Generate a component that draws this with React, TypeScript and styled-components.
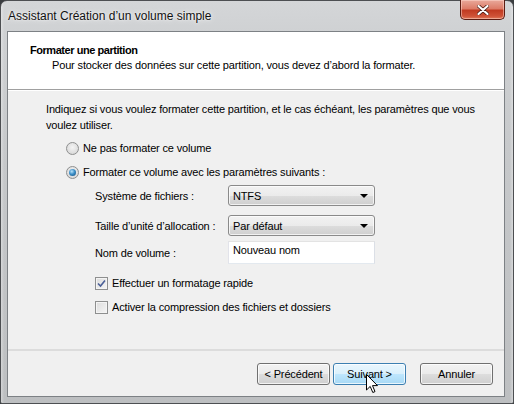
import React from "react";
import styled, { createGlobalStyle } from "styled-components";

const Global = createGlobalStyle`
  html, body { margin: 0; padding: 0; background: #3a3d40; }
  body { width: 514px; height: 404px; overflow: hidden; }
  * { box-sizing: border-box; }
`;

const FONT = `"Liberation Sans", Arial, sans-serif`;

const Window = styled.div`
  position: relative;
  width: 514px;
  height: 404px;
  display: flex;
  flex-direction: column;
  padding: 0 8px 6px 6px;
  border: 1px solid #4d4f52;
  border-radius: 7px 7px 2px 2px;
  background:
    linear-gradient(90deg, rgba(255,255,255,0.35) 0, rgba(255,255,255,0) 3px, rgba(255,255,255,0) calc(100% - 3px), rgba(255,255,255,0.35) 100%),
    linear-gradient(180deg, #d4d6d8 0%, #cfd1d3 8%, #c6c8ca 40%, #bdbfc1 100%);
  font-family: ${FONT};
  font-size: 11px;
  letter-spacing: -0.15px;
  color: #000;
`;

const TitleBar = styled.div`
  height: 30px;
  display: flex;
  align-items: flex-start;
`;

const Title = styled.div`
  padding: 8px 0 0 1px;
  font-size: 12px;
  letter-spacing: 0;
  color: #111;
  text-shadow: 0 0 6px rgba(255,255,255,0.9), 0 0 2px rgba(255,255,255,0.9);
  flex: 1;
`;

const CloseButton = styled.div`
  margin-top: -1px;
  width: 45px;
  height: 20px;
  border: 1px solid #5b1c12;
  border-top: none;
  border-radius: 0 0 5px 5px;
  background: linear-gradient(180deg, #e9a99b 0%, #dd7c68 45%, #c13b22 55%, #cf5237 85%, #e07a5a 100%);
  box-shadow: inset 0 0 0 1px rgba(255,220,210,0.5);
  display: flex;
  align-items: center;
  justify-content: center;
`;

const Client = styled.div`
  flex: 1;
  display: flex;
  flex-direction: column;
  border: 1px solid #7d8185;
  background: #f0f0f0;
`;

const Header = styled.div`
  height: 58px;
  background: #fff;
  border-bottom: 1px solid #a0a0a0;
  box-shadow: 0 1px 0 #fff;
  padding: 11px 0 0 22px;
`;

const HeaderTitle = styled.div`
  font-weight: bold;
  letter-spacing: -0.45px;
  line-height: 15px;
`;

const HeaderSub = styled.div`
  padding-left: 22px;
  line-height: 15px;
`;

const Body = styled.div`
  flex: 1;
  padding: 11px 10px 0 38px;
`;

const Para = styled.p`
  margin: 0;
  line-height: 16px;
`;

const Options = styled.div`
  margin: 7px 0 0 20px;
  display: flex;
  flex-direction: column;
`;

const OptionRow = styled.label<{ $mt?: number }>`
  display: flex;
  align-items: center;
  gap: 4px;
  height: 16px;
  margin-top: ${(p) => p.$mt ?? 0}px;
`;

const RadioCircle = styled.span<{ $checked?: boolean }>`
  width: 13px;
  height: 13px;
  border-radius: 50%;
  border: 1px solid #8e8f8f;
  background: radial-gradient(circle at 50% 40%, #f4f4f4 0%, #dcdcdc 70%, #cfcfcf 100%);
  display: flex;
  align-items: center;
  justify-content: center;
  &::after {
    content: "";
    display: ${(p) => (p.$checked ? "block" : "none")};
    width: 7px;
    height: 7px;
    border-radius: 50%;
    background: radial-gradient(circle at 40% 35%, #b9e3fa 0%, #3c8fc8 45%, #124b7a 100%);
  }
`;

const Form = styled.div`
  margin: 5px 0 0 49px;
  display: grid;
  grid-template-columns: 133px 147px;
  align-items: center;
`;

const FieldLabel = styled.div<{ $mt?: number }>`
  margin-top: ${(p) => p.$mt ?? 0}px;
`;

const Select = styled.div<{ $mt?: number }>`
  margin-top: ${(p) => p.$mt ?? 0}px;
  height: 21px;
  border: 1px solid #8a8a8a;
  border-radius: 3px;
  background: linear-gradient(180deg, #f2f2f2 0%, #ebebeb 50%, #dddddd 51%, #cfcfcf 100%);
  box-shadow: inset 0 0 0 1px rgba(255,255,255,0.7);
  display: flex;
  align-items: center;
  padding: 0 6px 0 4px;
  justify-content: space-between;
`;

const Arrow = styled.span`
  width: 0;
  height: 0;
  border-left: 4px solid transparent;
  border-right: 4px solid transparent;
  border-top: 4px solid #000;
`;

const TextBox = styled.div<{ $mt?: number }>`
  margin-top: ${(p) => p.$mt ?? 0}px;
  height: 23px;
  border: 1px solid #abadb3;
  border-top-color: #e3e3e3;
  border-left-color: #e2e3ea;
  border-right-color: #dbdfe6;
  border-bottom-color: #e3e9ef;
  background: #fff;
  padding: 2px 0 0 4px;
`;

const Checks = styled.div`
  margin: 11px 0 0 49px;
  display: flex;
  flex-direction: column;
`;

const CheckBox = styled.span<{ $checked?: boolean }>`
  width: 13px;
  height: 13px;
  border: 1px solid #8e8f8f;
  background: linear-gradient(135deg, #dcdcdc 0%, #f5f5f5 100%);
  box-shadow: inset 0 0 0 1px #f4f4f4;
  display: flex;
  align-items: center;
  justify-content: center;
`;

const Footer = styled.div`
  border-top: 2px solid #dcdcdc;
  padding: 12px 11px 11px 0;
  display: flex;
  justify-content: flex-end;
  gap: 3px;
`;

const Button = styled.div<{ $hover?: boolean; $gapLeft?: number }>`
  width: 73px;
  height: 22px;
  margin-left: ${(p) => p.$gapLeft ?? 0}px;
  border: 1px solid ${(p) => (p.$hover ? "#3c7fb1" : "#707070")};
  border-radius: 3px;
  background: ${(p) =>
    p.$hover
      ? "linear-gradient(180deg, #eaf6fd 0%, #d9f0fc 50%, #bee6fd 51%, #a7d9f5 100%)"
      : "linear-gradient(180deg, #f2f2f2 0%, #ebebeb 50%, #dddddd 51%, #cfcfcf 100%)"};
  box-shadow: inset 0 0 0 1px rgba(255,255,255,0.75);
  display: flex;
  align-items: center;
  justify-content: center;
  position: relative;
`;

const Cursor = styled.svg`
  position: absolute;
  left: 32px;
  top: 10px;
  overflow: visible;
`;

export default function App() {
  return (
    <>
      <Global />
      <Window>
        <TitleBar>
          <Title>Assistant Création d’un volume simple</Title>
          <CloseButton>
            <svg width="12" height="10" viewBox="0 0 12 10">
              <path d="M1.5 1 L10.5 9 M10.5 1 L1.5 9" stroke="#4a1a12" strokeWidth="3.6" strokeLinecap="round" />
              <path d="M1.5 1 L10.5 9 M10.5 1 L1.5 9" stroke="#fff" strokeWidth="2.2" strokeLinecap="round" />
            </svg>
          </CloseButton>
        </TitleBar>
        <Client>
          <Header>
            <HeaderTitle>Formater une partition</HeaderTitle>
            <HeaderSub>Pour stocker des données sur cette partition, vous devez d’abord la formater.</HeaderSub>
          </Header>
          <Body>
            <Para>
              Indiquez si vous voulez formater cette partition, et le cas échéant, les paramètres que vous
              <br />
              voulez utiliser.
            </Para>
            <Options>
              <OptionRow>
                <RadioCircle />
                Ne pas formater ce volume
              </OptionRow>
              <OptionRow $mt={8}>
                <RadioCircle $checked />
                Formater ce volume avec les paramètres suivants :
              </OptionRow>
            </Options>
            <Form>
              <FieldLabel>Système de fichiers :</FieldLabel>
              <Select>
                NTFS
                <Arrow />
              </Select>
              <FieldLabel $mt={9}>Taille d’unité d’allocation :</FieldLabel>
              <Select $mt={9}>
                Par défaut
                <Arrow />
              </Select>
              <FieldLabel $mt={5}>Nom de volume :</FieldLabel>
              <TextBox $mt={5}>Nouveau nom</TextBox>
            </Form>
            <Checks>
              <OptionRow>
                <CheckBox $checked>
                  <svg width="9" height="9" viewBox="0 0 9 9">
                    <path d="M1 4.5 L3.5 7 L8 1.5" stroke="#4a5f97" strokeWidth="1.6" fill="none" />
                  </svg>
                </CheckBox>
                Effectuer un formatage rapide
              </OptionRow>
              <OptionRow $mt={8}>
                <CheckBox />
                Activer la compression des fichiers et dossiers
              </OptionRow>
            </Checks>
          </Body>
          <Footer>
            <Button>&lt; Précédent</Button>
            <Button $hover>
              Suivant &gt;
              <Cursor width="12" height="20" viewBox="0 0 12 20">
                <path d="M0.5 0.5 L0.5 16 L4.2 12.4 L6.8 18.5 L9 17.6 L6.5 11.6 L11.5 11.6 Z" fill="#fff" stroke="#000" strokeWidth="1" strokeLinejoin="round" />
              </Cursor>
            </Button>
            <Button $gapLeft={11}>Annuler</Button>
          </Footer>
        </Client>
      </Window>
    </>
  );
}
